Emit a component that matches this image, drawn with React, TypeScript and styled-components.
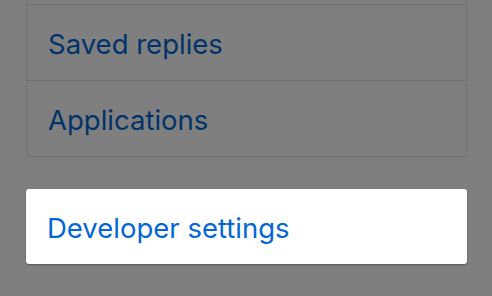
import React from 'react';
import styled, { createGlobalStyle } from 'styled-components';

const GlobalStyle = createGlobalStyle`
  html, body {
    margin: 0;
    padding: 0;
    background: #ffffff;
    font-family: 'Inter', 'Liberation Sans', sans-serif;
    -webkit-font-smoothing: antialiased;
  }
`;

const Page = styled.div`
  position: relative;
  width: 492px;
  height: 296px;
  overflow: hidden;
  box-sizing: border-box;
  padding: 0 25px 0 26px;
`;

/* dimmed backdrop behind the spotlighted item */
const Overlay = styled.div`
  position: absolute;
  inset: 0;
  background: rgba(0, 0, 0, 0.5);
  pointer-events: none;
`;

// list is scrolled, only the tail of the row above shows (4px)
const Menu = styled.nav`
  padding-top: 4px;
  border: 1px solid #e1e4e8;
  border-top: none;
  border-radius: 0 0 4px 4px;
  background: #ffffff;
`;

const MenuItem = styled.a`
  display: flex;
  align-items: center;
  height: 76px;
  box-sizing: border-box;
  padding: 2px 21px 0;
  border-top: 1px solid #e1e4e8;
  font-size: 27.5px;
  color: #0366d6;
  text-decoration: none;
`;

const Spotlight = styled.a`
  position: relative;
  z-index: 2;
  display: flex;
  align-items: center;
  height: 75px;
  margin-top: 32px;
  box-sizing: border-box;
  padding: 2px 21px 0;
  background: #ffffff;
  border-radius: 3px;
  box-shadow: 0 1px 2px rgba(0, 0, 0, 0.35);
  font-size: 27.5px;
  color: #0366d6;
  text-decoration: none;
`;

const items = ['Saved replies', 'Applications'];

const App = () => {
  return (
    <>
      <GlobalStyle />
      <Page>
        <Menu>
          {items.map((label) => (
            <MenuItem key={label} href="#">
              {label}
            </MenuItem>
          ))}
        </Menu>
        <Overlay />
        <Spotlight href="#">Developer settings</Spotlight>
      </Page>
    </>
  );
};

export default App;
